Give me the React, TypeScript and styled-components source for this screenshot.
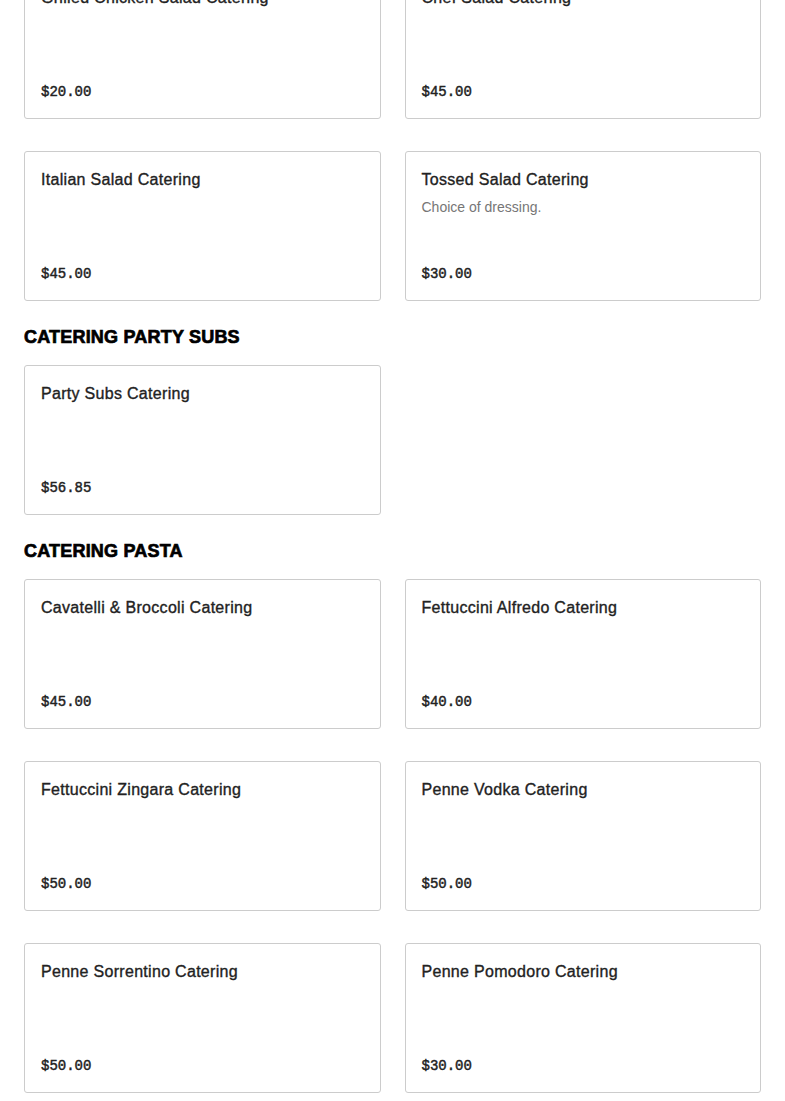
import { createGlobalStyle, styled } from 'styled-components';

type Item = { name: string; price: string; description?: string };
type Section = { title?: string; items: Item[] };

const sections: Section[] = [
    {
        items: [
            { name: 'Grilled Chicken Salad Catering', price: '$20.00' },
            { name: 'Chef Salad Catering', price: '$45.00' },
            { name: 'Italian Salad Catering', price: '$45.00' },
            { name: 'Tossed Salad Catering', price: '$30.00', description: 'Choice of dressing.' },
        ],
    },
    {
        title: 'Catering Party Subs',
        items: [{ name: 'Party Subs Catering', price: '$56.85' }],
    },
    {
        title: 'Catering Pasta',
        items: [
            { name: 'Cavatelli & Broccoli Catering', price: '$45.00' },
            { name: 'Fettuccini Alfredo Catering', price: '$40.00' },
            { name: 'Fettuccini Zingara Catering', price: '$50.00' },
            { name: 'Penne Vodka Catering', price: '$50.00' },
            { name: 'Penne Sorrentino Catering', price: '$50.00' },
            { name: 'Penne Pomodoro Catering', price: '$30.00' },
        ],
    },
];

const GlobalStyle = createGlobalStyle`
    html, body {
        margin: 0;
        padding: 0;
        background: #ffffff;
        font-family: "Liberation Sans", Arial, sans-serif;
        color: #222222;
    }
    * { box-sizing: border-box; }
`;

export default function App() {
    return (
        <>
            <GlobalStyle />
            <Page>
                {sections.map((section, i) => (
                    <MenuSection key={i}>
                        {section.title && <SectionTitle>{section.title}</SectionTitle>}
                        <Grid>
                            {section.items.map((item) => (
                                <Card key={item.name}>
                                    <div>
                                        <ItemName>{item.name}</ItemName>
                                        {item.description && <Description>{item.description}</Description>}
                                    </div>
                                    <Price>{item.price}</Price>
                                </Card>
                            ))}
                        </Grid>
                    </MenuSection>
                ))}
            </Page>
        </>
    );
}

// the page is shown scrolled, so the first row starts above the top edge
const Page = styled.main`
    margin-top: -31px;
    padding: 0 24px 40px;
    display: flex;
    flex-direction: column;
    gap: 24px;
`;

const MenuSection = styled.section`
    display: flex;
    flex-direction: column;
    gap: 16px;
`;

const SectionTitle = styled.h2`
    margin: 0;
    font-size: 18px;
    line-height: 24px;
    font-weight: 700;
    letter-spacing: 0.2px;
    text-transform: uppercase;
    color: #000000;
    -webkit-text-stroke: 0.7px #000000;
`;

const Grid = styled.div`
    display: grid;
    grid-template-columns: 1fr 1fr;
    column-gap: 24px;
    row-gap: 32px;
`;

const Card = styled.div`
    height: 150px;
    padding: 16px;
    border: 1px solid #cccccc;
    border-radius: 3px;
    display: flex;
    flex-direction: column;
    justify-content: space-between;
    background: #ffffff;
`;

const ItemName = styled.div`
    font-size: 16px;
    line-height: 24px;
    font-weight: 400;
    letter-spacing: 0.3px;
    color: #222222;
    -webkit-text-stroke: 0.35px #222222;
`;

const Description = styled.div`
    margin-top: 5px;
    font-size: 14px;
    line-height: 20px;
    color: #767676;
`;

const Price = styled.div`
    font-family: "Liberation Mono", "Courier New", monospace;
    font-size: 14px;
    line-height: 20px;
    font-weight: 400;
    color: #222222;
    -webkit-text-stroke: 0.45px #222222;
`;
